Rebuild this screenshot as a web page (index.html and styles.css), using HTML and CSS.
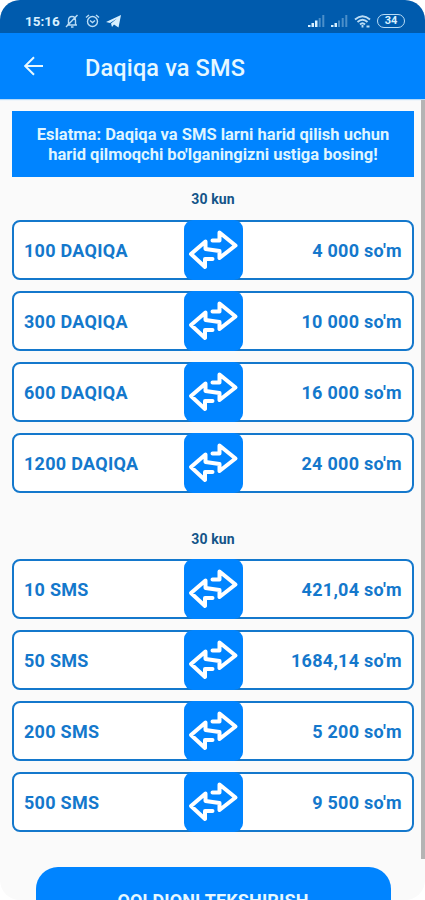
FILE: index.html
```html
<!DOCTYPE html>
<html lang="uz">
<head>
    <meta charset="UTF-8">
    <meta name="viewport" content="width=device-width, initial-scale=1.0">
    <title>Daqiqa va SMS</title>
    <link rel="stylesheet" href="styles.css">
</head>
<body>
    <svg class="symbols">
        <symbol id="swap" viewBox="0 0 59 60">
            <path d="M28.5 20.500H35.500V12.500L51.500 25.500L35.500 38V31L21.500 29V21.500L7 34L21 47V39H28.500"/>
        </symbol>
    </svg>
    <div class="screen">
        <div class="status-bar">
            <span class="time">15:16</span>
            <svg class="bell" width="14" height="14" viewBox="0 0 14 14">
                <path d="M2 11H12M3.500 11V6.500C3.500 4 5 2.500 7 2.500S10.500 4 10.500 6.500V11M6 13H8.500M12.500 1L1 13"/>
            </svg>
            <svg class="alarm" width="15" height="14" viewBox="0 0 15 14">
                <circle cx="7.500" cy="7.500" r="5"/>
                <path d="M1 3.500L4 1M14 3.500L11 1M5 6.500L7.500 8.500L10 6.500"/>
            </svg>
            <svg class="plane" width="15" height="13" viewBox="0 0 15 13">
                <path d="M0 7L15 0L12.500 12.500L8 9.500L6 12L5 8.500L11 3.500L4 8Z"/>
            </svg>
            <div class="status-right">
                <svg width="17" height="12" viewBox="0 0 17 12">
                    <path d="M0 10H2.500V12H0ZM3.500 8H6V12H3.500ZM7 5.500H9.500V12H7Z"/>
                    <path class="dim" d="M10.700 3H12.700V12H10.700ZM14.300 0H16.300V12H14.300Z"/>
                </svg>
                <svg width="17" height="12" viewBox="0 0 17 12">
                    <path d="M0 10H2.500V12H0ZM3.500 8H6V12H3.500Z"/>
                    <path class="dim" d="M7 5.500H9V12H7ZM10.700 3H12.700V12H10.700ZM14.300 0H16.300V12H14.300Z"/>
                </svg>
                <svg class="wifi" width="17" height="13" viewBox="0 0 17 13">
                    <path d="M1 4.500Q8.500 -2 16 4.500M3.500 7Q8.500 2.500 13.500 7M6 9.500Q8.500 7 11 9.500M8.500 10V12.500M12.500 11.500H15.500"/>
                </svg>
                <span class="battery">34</span>
            </div>
        </div>
        <div class="toolbar">
            <svg class="back" width="20" height="20" viewBox="0 0 20 20">
                <path d="M19 10H1.500M10 1.200L1.200 10L10 18.800"/>
            </svg>
            <h1>Daqiqa va SMS</h1>
        </div>
        <div class="content">
            <div class="note">Eslatma: Daqiqa va SMS larni harid qilish uchun<br>harid qilmoqchi bo'lganingizni ustiga bosing!</div>

            <h2>30 kun</h2>
            <div class="list">
                <div class="card"><span>100 DAQIQA</span><svg class="swap"><use href="#swap"/></svg><span class="price">4 000 so'm</span></div>
                <div class="card"><span>300 DAQIQA</span><svg class="swap"><use href="#swap"/></svg><span class="price">10 000 so'm</span></div>
                <div class="card"><span>600 DAQIQA</span><svg class="swap"><use href="#swap"/></svg><span class="price">16 000 so'm</span></div>
                <div class="card"><span>1200 DAQIQA</span><svg class="swap"><use href="#swap"/></svg><span class="price">24 000 so'm</span></div>
            </div>

            <h2 class="second">30 kun</h2>
            <div class="list">
                <div class="card"><span>10 SMS</span><svg class="swap"><use href="#swap"/></svg><span class="price">421,04 so'm</span></div>
                <div class="card"><span>50 SMS</span><svg class="swap"><use href="#swap"/></svg><span class="price">1684,14 so'm</span></div>
                <div class="card"><span>200 SMS</span><svg class="swap"><use href="#swap"/></svg><span class="price">5 200 so'm</span></div>
                <div class="card"><span>500 SMS</span><svg class="swap"><use href="#swap"/></svg><span class="price">9 500 so'm</span></div>
            </div>

            <button class="check-button">QOLDIQNI TEKSHIRISH</button>
        </div>
        <div class="scrollbar"></div>
    </div>
</body>
</html>
```
FILE: styles.css
```css
* {
    box-sizing: border-box;
}
body {
    margin: 0;
    background-color: #fff;
    font-family: Roboto, sans-serif;
}
.symbols {
    display: none;
}
.screen {
    position: relative;
    width: 425px;
    height: 900px;
    overflow: hidden;
    border-radius: 20px;
    background-color: #fafafa;
}
.status-bar {
    display: flex;
    align-items: center;
    height: 33px;
    padding: 9px 20px 0 25px;
    background-color: #005bad;
    color: #d8f0ff;
}
.status-bar svg {
    fill: #d8f0ff;
}
.status-bar .bell,
.status-bar .alarm,
.status-bar .wifi {
    fill: none;
    stroke: #b9dcf5;
    stroke-width: 1.4;
}
.status-bar .wifi {
    stroke-width: 1.9;
}
.time {
    width: 40px;
    font-size: 13.5px;
    font-weight: 700;
}
.alarm {
    margin-left: 6px;
}
.plane {
    margin-left: 6px;
}
.status-right {
    display: flex;
    align-items: center;
    gap: 6px;
    margin-left: auto;
}
.dim {
    opacity: 0.35;
}
.battery {
    width: 28px;
    height: 14px;
    border: 1.5px solid #b9dcf5;
    border-radius: 7px;
    font-size: 11px;
    font-weight: 700;
    line-height: 12px;
    text-align: center;
}
.toolbar {
    display: flex;
    align-items: center;
    height: 66px;
    padding-left: 24px;
    background-color: #0084ff;
    box-shadow: 0 1px 1px #b5daf8;
    color: #e6f8ff;
}
.back {
    fill: none;
    stroke: #e6f8ff;
    stroke-width: 2;
}
.toolbar h1 {
    margin: 3px 0 0 41px;
    font-size: 23.5px;
    font-weight: 500;
    letter-spacing: 0.15px;
}
.content {
    padding: 12px 11px 0 12px;
}
.note {
    height: 66px;
    padding-top: 14px;
    background-color: #0084ff;
    color: #dff5ff;
    font-size: 16.5px;
    font-weight: 700;
    line-height: 20px;
    text-align: center;
    white-space: nowrap;
}
h2 {
    height: 43px;
    margin: 0;
    padding-top: 13px;
    color: #135488;
    font-size: 14px;
    font-weight: 700;
    line-height: 18px;
    letter-spacing: 0.1px;
    text-align: center;
}
h2.second {
    height: 66px;
    padding-top: 37px;
}
.list {
    display: flex;
    flex-direction: column;
    gap: 11px;
}
.card {
    display: grid;
    grid-template-columns: 1fr 59px 1fr;
    align-items: center;
    height: 60px;
    border: 2px solid #1478cc;
    border-radius: 8px;
    background-color: #fff;
    padding: 0 10px;
    color: #1478cc;
    font-size: 18px;
    font-weight: 700;
    letter-spacing: 0.28px;
}
.price {
    text-align: right;
}
.swap {
    width: 59px;
    height: 60px;
    margin: -2px 0;
    border-radius: 9px;
    background-color: #0084ff;
    fill: none;
    stroke: #fff;
    stroke-width: 4;
    stroke-linecap: round;
    stroke-linejoin: round;
}
.check-button {
    display: block;
    width: 355px;
    height: 66px;
    margin: 35px auto 0;
    border: none;
    border-radius: 22px;
    background-color: #0084ff;
    color: #e6f8ff;
    font-family: inherit;
    font-size: 18px;
    font-weight: 700;
    letter-spacing: 0.15px;
}
.scrollbar {
    position: absolute;
    top: 100px;
    right: 0;
    width: 4px;
    height: 759px;
    background-color: #b4b4b4;
}
```
